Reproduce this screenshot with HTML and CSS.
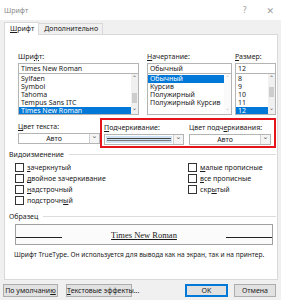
FILE: index.html
```html
<!DOCTYPE html>
<html lang="ru">
<head>
<meta charset="UTF-8">
<title>Шрифт</title>
<link rel="stylesheet" href="styles.css">
</head>
<body>
<div class="dialog">
  <div class="titlebar">
    <span class="title">Шрифт</span>
    <span class="tb-btns"><span>?</span><span class="close">✕</span></span>
  </div>

  <div class="tabs">
    <div class="tab active"><u>Ш</u>рифт</div>
    <div class="tab">Дополнительно</div>
  </div>

  <div class="panel">
    <div class="fontrow">
      <div class="col col-font">
        <div class="lbl">Шри<u>ф</u>т:</div>
        <div class="field">Times New Roman</div>
        <div class="list">
          <div class="items">
            <div>Sylfaen</div>
            <div>Symbol</div>
            <div>Tahoma</div>
            <div>Tempus Sans ITC</div>
            <div class="sel">Times New Roman</div>
          </div>
          <div class="sbar"><span class="up">⌃</span><span class="thumb t1"></span><span class="dn">⌄</span></div>
        </div>
      </div>
      <div class="col col-style">
        <div class="lbl"><u>Н</u>ачертание:</div>
        <div class="field">Обычный</div>
        <div class="list">
          <div class="items">
            <div class="sel">Обычный</div>
            <div>Курсив</div>
            <div>Полужирный</div>
            <div>Полужирный Курсив</div>
          </div>
          <div class="sbar dim"><span class="up">⌃</span><span class="dn">⌄</span></div>
        </div>
      </div>
      <div class="col col-size">
        <div class="lbl"><u>Р</u>азмер:</div>
        <div class="field">12</div>
        <div class="list">
          <div class="items">
            <div>8</div>
            <div>9</div>
            <div>10</div>
            <div>11</div>
            <div class="sel">12</div>
          </div>
          <div class="sbar"><span class="up">⌃</span><span class="thumb t2"></span><span class="dn">⌄</span></div>
        </div>
      </div>
    </div>

    <div class="colorrow">
      <div class="c-text">
        <div class="lbl"><u>Ц</u>вет текста:</div>
        <div class="combo"><span class="cval">Авто</span><span class="arrow">⌄</span></div>
      </div>
      <div class="redbox">
        <div class="c-under">
          <div class="lbl"><u>П</u>одчеркивание:</div>
          <div class="combo focus"><span class="cval"><span class="uline"></span></span><span class="arrow">⌄</span></div>
        </div>
        <div class="c-ucolor">
          <div class="lbl">Цвет подч<u>е</u>ркивания:</div>
          <div class="combo"><span class="cval">Авто</span><span class="arrow">⌄</span></div>
        </div>
      </div>
    </div>

    <div class="group">
      <div class="ghead"><span>Видоизменение</span><span class="gline"></span></div>
      <div class="checks">
        <div class="ccol">
          <label><span class="box"></span><u>з</u>ачеркнутый</label>
          <label><span class="box"></span><u>д</u>войное зачеркивание</label>
          <label><span class="box"></span><u>н</u>адстрочный</label>
          <label><span class="box"></span>подстрочн<u>ы</u>й</label>
        </div>
        <div class="ccol">
          <label><span class="box"></span><u>м</u>алые прописные</label>
          <label><span class="box"></span><u>в</u>се прописные</label>
          <label><span class="box"></span>скр<u>ы</u>тый</label>
        </div>
      </div>
    </div>

    <div class="group sample">
      <div class="ghead"><span>Образец</span><span class="gline"></span></div>
      <div class="preview">
        <span class="pline"></span>
        <span class="ptext">Times New Roman</span>
        <span class="pline"></span>
      </div>
      <div class="note">Шрифт TrueType. Он используется для вывода как на экран, так и на принтер.</div>
    </div>
  </div>

  <div class="buttons">
    <button class="btn b-def">По умолчани<u>ю</u></button>
    <button class="btn b-fx"><u>Т</u>екстовые эффекты...</button>
    <span class="spacer"></span>
    <button class="btn b-ok">OK</button>
    <button class="btn b-cancel">Отмена</button>
  </div>
</div>
</body>
</html>
```

FILE: styles.css
```css
body {
    margin: 0;
    background: #f0f0f0;
    font-family: "Noto Sans", "DejaVu Sans", sans-serif;
    font-size: 7px;
    color: #1a1a1a;
}

.dialog {
    width: 281px;
    height: 300px;
    overflow: hidden;
}

.titlebar {
    height: 20px;
    background: #ffffff;
    display: flex;
    align-items: center;
    justify-content: space-between;
    padding: 0 7px 0 4px;
    color: #8a8a8a;
}

.tb-btns {
    display: flex;
    gap: 20px;
    color: #9a9a9a;
    font-size: 8px;
}

.close {
    font-size: 9px;
}

.tabs {
    display: flex;
    padding: 3px 0 0 4px;
    height: 11px;
    align-items: flex-end;
}

.tab {
    height: 10px;
    line-height: 10px;
    padding: 0 4px 0 5px;
    border: 1px solid #d9d9d9;
    border-bottom: none;
    background: #f0f0f0;
    margin-left: -1px;
}

.tab:first-child {
    margin-left: 0;
}

.tab.active {
    background: #ffffff;
    height: 12px;
    line-height: 12px;
    position: relative;
    top: 1px;
    z-index: 1;
}

.panel {
    width: 274px;
    margin-left: 4px;
    height: 246px;
    background: #ffffff;
    border: 1px solid #d9d9d9;
    box-sizing: border-box;
    padding-top: 17px;
}

/* font / style / size lists */
.fontrow {
    display: grid;
    grid-template-columns: 121px 85px 36px;
    column-gap: 8px;
    padding-left: 13px;
}

.col-size { margin-left: -5px; }

.lbl {
    height: 10px;
    line-height: 9px;
    white-space: nowrap;
}

.field {
    border: 1px solid #b4b4b4;
    height: 11px;
    line-height: 10px;
    padding-left: 2px;
    box-sizing: border-box;
    margin-top: 1px;
}

.list {
    border: 1px solid #b4b4b4;
    border-top: none;
    height: 41px;
    box-sizing: border-box;
    display: flex;
    overflow: hidden;
}

.items {
    flex: 1;
    padding-top: 1px;
    overflow: hidden;
}

.items div {
    height: 8px;
    line-height: 8px;
    padding-left: 2px;
    white-space: nowrap;
}

.items .sel {
    background: #0078d7;
    color: #ffffff;
}

.sbar {
    width: 7px;
    background: #f0f0f0;
    display: flex;
    flex-direction: column;
    align-items: center;
    position: relative;
    font-size: 6px;
    color: #555;
}

.sbar.dim {
    background: #fafafa;
    color: #c8c8c8;
}

.sbar .up {
    height: 6px;
    line-height: 8px;
}

.sbar .dn {
    margin-top: auto;
    line-height: 2px;
    height: 7px;
}

.thumb {
    position: absolute;
    left: 1px;
    width: 5px;
    height: 10px;
    background: #cdcdcd;
}

.t1 { top: 19px; }
.t2 { top: 13px; }

/* colour and underline */
.colorrow {
    display: grid;
    grid-template-columns: 82px 176px;
    align-items: start;
    margin-top: 3px;
    padding-left: 13px;
}

.lbl + .combo {
    margin-top: 1px;
}

.c-text {
    padding-top: 4px;
}

.redbox {
    border: 2px solid #e5131b;
    height: 30px;
    box-sizing: border-box;
    display: grid;
    grid-template-columns: 80px 82px;
    column-gap: 5px;
    padding: 3px 0 0 2px;
}

.combo {
    border: 1px solid #b4b4b4;
    height: 11px;
    box-sizing: border-box;
    display: flex;
    background: #ffffff;
}

.cval {
    flex: 1;
    line-height: 9px;
    display: flex;
    align-items: center;
    justify-content: center;
}

.combo.focus .cval {
    margin: 1px;
    background: #cfe3f5;
}

.uline {
    display: block;
    width: 64px;
    height: 3px;
    border-top: 1px solid #444;
    border-bottom: 1px solid #777;
    box-sizing: border-box;
}

.arrow {
    width: 9px;
    border-left: 1px solid #d0d0d0;
    background: #f4f4f4;
    text-align: center;
    line-height: 3px;
    font-size: 7px;
    color: #555;
}

/* groups */
.group {
    padding-left: 4px;
}

.ghead {
    display: flex;
    align-items: center;
    height: 10px;
    margin-top: 1px;
}

.gline {
    flex: 1;
    border-top: 1px solid #dcdcdc;
    margin-left: 5px;
    margin-right: 1px;
}

.checks {
    display: grid;
    grid-template-columns: 173px auto;
    margin-top: 3px;
    padding-left: 6px;
}

.ccol label {
    display: flex;
    align-items: center;
    height: 11px;
    white-space: nowrap;
}

.box {
    width: 7px;
    height: 7px;
    border: 1px solid #333;
    background: #fff;
    margin-right: 3px;
}

.sample .ghead {
    margin-top: 5px;
}

.preview {
    margin: 3px 4px 0 6px;
    height: 21px;
    border: 1px solid #a0a0a0;
    box-sizing: border-box;
    background: #fbfbfb;
    display: flex;
    align-items: center;
    justify-content: space-between;
}

.pline {
    width: 46px;
    border-top: 1px solid #222;
    margin-top: 6px;
}

.ptext {
    font-family: "Liberation Serif", serif;
    font-size: 8.5px;
    text-decoration: underline;
}

.note {
    margin: 5px 0 0 5px;
    white-space: nowrap;
    font-size: 6.6px;
}

/* buttons */
.buttons {
    display: flex;
    padding: 4px 5px 0 3px;
    gap: 8px;
}

.btn {
    height: 13px;
    padding: 0;
    font-family: inherit;
    font-size: 7px;
    line-height: 11px;
    white-space: nowrap;
    background: #e1e1e1;
    border: 1px solid #adadad;
    color: #1a1a1a;
    box-sizing: border-box;
}

.b-def { width: 55px; }
.b-fx { width: 66px; }
.b-ok { width: 43px; border: 1px solid #0078d7; box-shadow: inset 0 0 0 1px #0078d7; }
.b-cancel { width: 42px; margin-left: -2px; }

.spacer { flex: 1; }
```
